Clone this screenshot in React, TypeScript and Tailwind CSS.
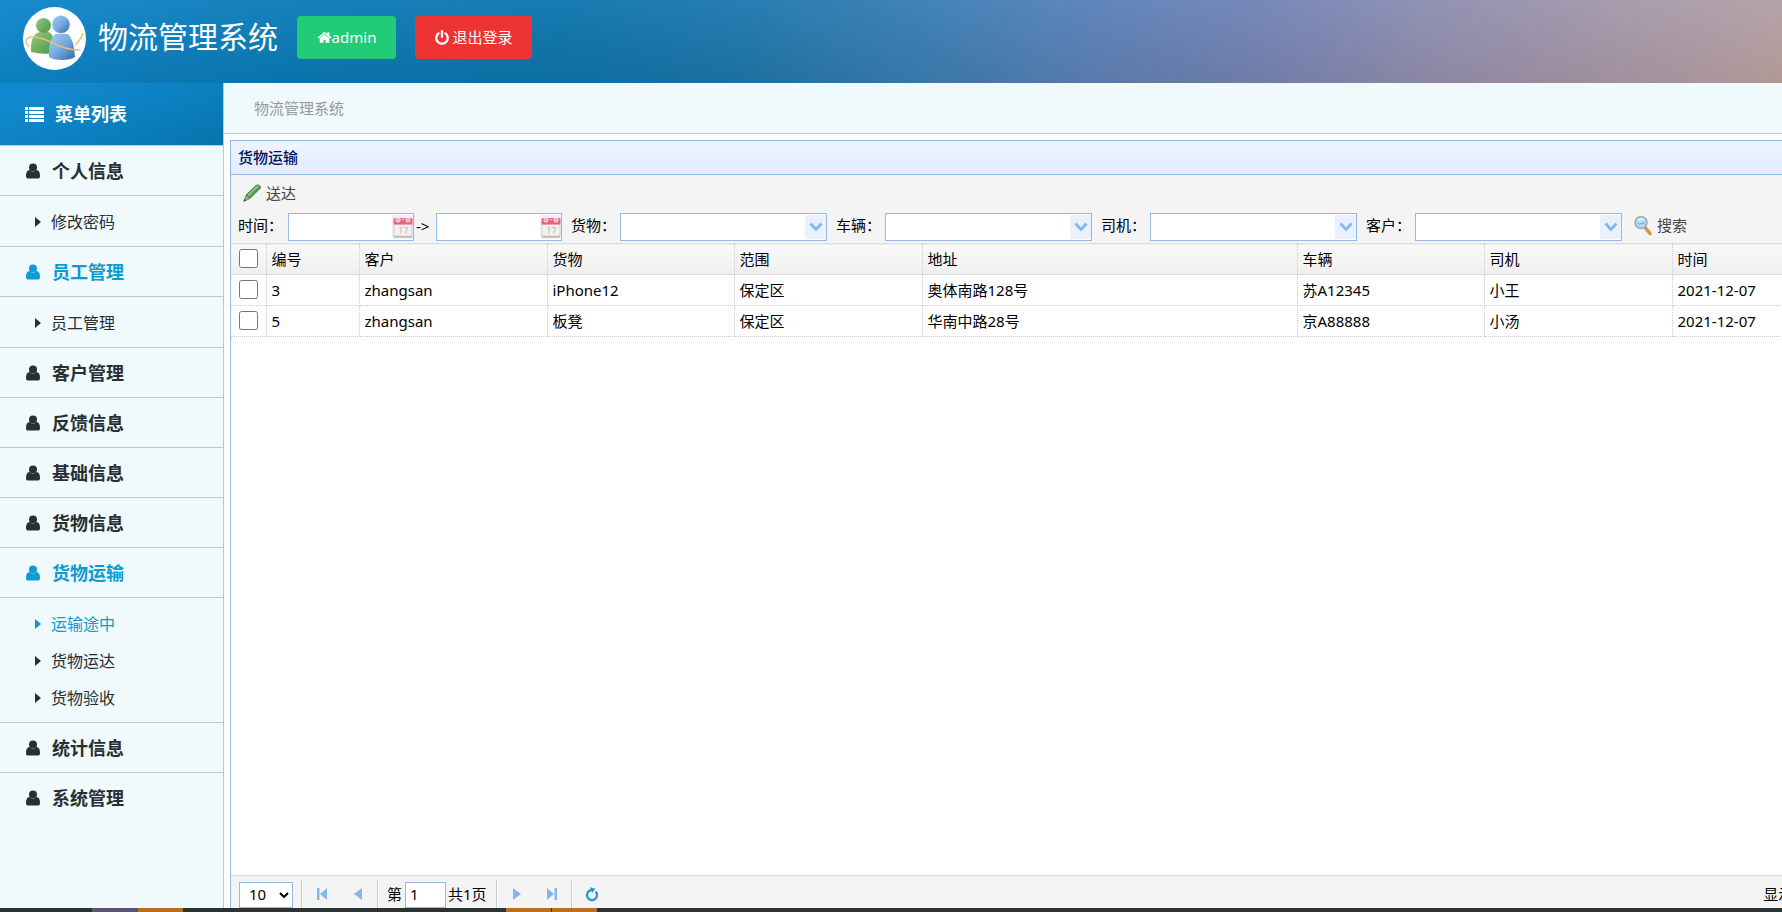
import { ReactNode } from "react";

interface MenuItem {
    title: string;
    active?: boolean;
    children?: { title: string; active?: boolean }[];
}

const menu: MenuItem[] = [
    { title: "个人信息", children: [{ title: "修改密码" }] },
    { title: "员工管理", active: true, children: [{ title: "员工管理" }] },
    { title: "客户管理" },
    { title: "反馈信息" },
    { title: "基础信息" },
    { title: "货物信息" },
    {
        title: "货物运输",
        active: true,
        children: [
            { title: "运输途中", active: true },
            { title: "货物运达" },
            { title: "货物验收" },
        ],
    },
    { title: "统计信息" },
    { title: "系统管理" },
];

const columns = [
    { title: "编号", width: "w-[93px]" },
    { title: "客户", width: "w-[188px]" },
    { title: "货物", width: "w-[187px]" },
    { title: "范围", width: "w-[188px]" },
    { title: "地址", width: "w-[375px]" },
    { title: "车辆", width: "w-[187px]" },
    { title: "司机", width: "w-[188px]" },
    { title: "时间", width: "" },
];

const rows = [
    ["3", "zhangsan", "iPhone12", "保定区", "奥体南路128号", "苏A12345", "小王", "2021-12-07"],
    ["5", "zhangsan", "板凳", "保定区", "华南中路28号", "京A88888", "小汤", "2021-12-07"],
];

const UserIcon = () => (
    <svg viewBox="0 0 14 16" className="h-4 w-[14px]" fill="currentColor" aria-hidden="true">
        <circle cx="7" cy="4.500" r="4" />
        <path d="M3.400 7Q7 10.600 10.600 7 14 7.400 14 13 14 15.600 11.500 15.600h-9Q0 15.600 0 13 0 7.400 3.400 7z" />
    </svg>
);

const HomeIcon = () => (
    <svg viewBox="0 0 1792 1792" className="size-[15px]" fill="currentColor" aria-hidden="true">
        <path d="M1472 992v480q0 26-19 45t-45 19h-384v-384h-256v384h-384q-26 0-45-19t-19-45v-480q0-1 .5-3t.5-3l575-474 575 474q1 2 1 6zm223-69l-62 74q-8 9-21 11h-3q-13 0-21-7l-692-577-692 577q-12 8-24 7-13-2-21-11l-62-74q-8-10-7-23.5t11-21.5l719-599q32-26 76-26t76 26l244 204v-195q0-14 9-23t23-9h192q14 0 23 9t9 23v408l219 182q10 8 11 21.5t-7 23.5z" />
    </svg>
);

const PowerIcon = () => (
    <svg viewBox="0 0 1792 1792" className="size-4" fill="currentColor" aria-hidden="true">
        <path d="M1664 896q0 156-61 298t-164 245-245 164-298 61-298-61-245-164-164-245-61-298q0-182 80.5-343t226.5-270q43-32 95.5-25t83.5 50q32 42 24.5 94.5t-49.5 84.5q-98 74-151.5 181t-53.5 228q0 104 40.5 198.5t109.5 163.5 163.5 109.5 198.5 40.5 198.5-40.5 163.5-109.5 109.5-163.5 40.5-198.5q0-121-53.5-228t-151.5-181q-42-32-49.5-84.5t24.5-94.5q31-43 84-50t95 25q146 109 226.5 270t80.5 343zm-640-768v640q0 52-38 90t-90 38-90-38-38-90v-640q0-52 38-90t90-38 90 38 38 90z" />
    </svg>
);

const ListIcon = () => (
    <svg viewBox="0 0 19 15" className="h-[15px] w-[19px]" fill="currentColor" aria-hidden="true">
        <path d="M0 0h3v3H0zM0 4h3v3H0zM0 8h3v3H0zM0 12h3v3H0zM4 0h15v3H4zM4 4h15v3H4zM4 8h15v3H4zM4 12h15v3H4z" />
    </svg>
);

const CaretIcon = () => (
    <svg viewBox="0 0 6 10" className="h-[10px] w-[6px]" fill="currentColor" aria-hidden="true">
        <path d="M0 0l6 5-6 5z" />
    </svg>
);

const PencilIcon = () => (
    <svg viewBox="0 0 18 18" className="size-[18px]" aria-hidden="true">
        <path d="M3 11L13 1.500Q14.500.300 16.500 1.500T17 4.500L7 14.500z" fill="#4f9e52" stroke="#2f6b35" strokeWidth=".7" />
        <path d="M5 11.500L15 2" stroke="#9bd293" strokeWidth="1.300" />
        <path d="M3 11l4 3.500L.7 17.500z" fill="#8fb07a" stroke="#4d6b45" strokeWidth=".6" />
        <path d="M1.700 14.900l1.500 1.400-2.500 1.200z" fill="#333" />
    </svg>
);

const CalendarIcon = () => (
    <svg viewBox="0 0 20 21" className="h-[21px] w-[20px]" aria-hidden="true">
        <path d="M1 7h18v12q0 1.500-1.500 1.500h-15Q1 20.500 1 19z" fill="#f3f1ee" stroke="#d5d0cc" />
        <path d="M1 19.500h18" stroke="#bdb8b4" strokeWidth="1.500" />
        <path d="M.5 2.500q0-1.500 1.500-1.500h16q1.500 0 1.500 1.500V7.500H.5z" fill="#ee6078" />
        <g fill="#c9b9bd" stroke="#f7eeee" strokeWidth=".8">
            <circle cx="5" cy="3" r="2.200" />
            <circle cx="15" cy="3" r="2.200" />
        </g>
        <path d="M8.500 1.500h3v2h-3z" fill="#d9a5ae" />
        <path d="M6.500 11l1.500-.8v6.300M10.500 10.500h4l-2 6" stroke="#d0ccc8" strokeWidth="1.500" fill="none" />
    </svg>
);

const SearchIcon = () => (
    <svg viewBox="0 0 18 22" className="h-[22px] w-[18px]" aria-hidden="true">
        <path d="M11 12.500l1.500 2" stroke="#8d8f96" strokeWidth="3" />
        <path d="M12.800 14.500l3.200 4" stroke="#d9953c" strokeWidth="3.600" strokeLinecap="round" />
        <circle cx="7" cy="7.500" r="5.800" fill="#b5e2f7" stroke="#a9afb8" strokeWidth="2" />
        <path d="M4 7.500q1 3.500 3 1 2 2 3-1.500" stroke="#4a9fd6" fill="none" />
        <path d="M4 5q3-3 6 0" stroke="#fff" fill="none" />
    </svg>
);

const Logo = () => (
    <svg viewBox="0 0 63 63" className="size-[63px]" aria-hidden="true">
        <defs>
            <linearGradient id="green" x1="0" y1="0" x2="1" y2="1">
                <stop offset="0" stopColor="#96c983" />
                <stop offset="1" stopColor="#4a9444" />
            </linearGradient>
            <linearGradient id="blue" x1="0" y1="0" x2="1" y2="1">
                <stop offset="0" stopColor="#a4cdf2" />
                <stop offset=".5" stopColor="#76aae0" />
                <stop offset="1" stopColor="#2f69b0" />
            </linearGradient>
        </defs>
        <circle cx="31.500" cy="31.500" r="31.500" fill="#fff" />
        <path d="M8 45Q7 27 17 25h8q7 1 7 21-12 2-24-1z" fill="url(#green)" />
        <circle cx="20.500" cy="18.500" r="7.500" fill="url(#green)" />
        <path d="M26 50Q25 33 32 27h13q6 5 7 23-4 3-13 3t-13-3z" fill="url(#blue)" />
        <circle cx="38" cy="17.500" r="9" fill="url(#blue)" stroke="#d7e8f8" strokeWidth=".6" />
        <path d="M6 40Q1 34 5 31q6-3 23 4 14 8 29 8M52 38q5-4 8-12" fill="none" stroke="#e9bf78" strokeWidth="1.500" />
    </svg>
);

const DateField = ({ label }: { label: string }) => (
    <span className="flex h-7 w-[126px] items-center border border-[#95b8e7] bg-white">
        <input aria-label={label} className="h-full min-w-0 flex-1 px-1 outline-none" />
        <button aria-label="选择日期" className="flex h-6 w-[21px] items-center justify-center bg-[#e9f1ff]">
            <CalendarIcon />
        </button>
    </span>
);

const ComboField = ({ id, label }: { id: string; label: string }) => (
    <>
        <label htmlFor={id} className="ml-[9px] w-[49px] pb-[3px]">{label}</label>
        <span className="flex h-7 w-[207px] items-center border border-[#95b8e7] bg-white">
            <input id={id} className="h-full min-w-0 flex-1 px-1 outline-none" />
            <button aria-label={"展开" + label} className="flex h-6 w-[21px] items-center justify-center bg-[#e9f1ff]">
                <svg viewBox="0 0 14 10" className="h-[10px] w-[14px]" aria-hidden="true">
                    <path d="M1.500 1.500L7 7.500l5.500-6" fill="none" stroke="#84b8ea" strokeWidth="2.800" />
                </svg>
            </button>
        </span>
    </>
);

const PagerButton = ({ label, children }: { label: string; children: ReactNode }) => (
    <button aria-label={label} className="flex h-7 w-[30px] items-center justify-center">
        {children}
    </button>
);

const Separator = () => <span className="h-7 w-[2px] border-l border-[#ccc] bg-white" />;

const Header = () => (
    <header className="flex h-[83px] items-start overflow-hidden bg-[linear-gradient(to_bottom,rgba(120,170,220,0.1),rgba(0,0,0,0.07)),linear-gradient(97deg,#0d88cc_0%,#0b7cb8_16%,#0d76ac_32%,#2078ad_42%,#3c7fb4_52%,#5a82b8_60%,#7685b5_70%,#9590b0_80%,#ac9aa9_90%,#bea4a2_100%)] pl-[23px] text-white">
        <div className="mt-[7px]">
            <Logo />
        </div>
        <h1 className="ml-3 mt-4 text-[30px] leading-[42px]">物流管理系统</h1>
        <button className="ml-[19px] mt-4 flex h-[43px] w-[99px] items-center justify-center rounded bg-[#22cc77]">
            <HomeIcon />
            admin
        </button>
        <button className="ml-[19px] mt-4 flex h-[43px] w-[117px] items-center justify-center gap-[2px] rounded bg-[#ee3333]">
            <PowerIcon />
            退出登录
        </button>
    </header>
);

const Sidebar = () => (
    <nav className="w-[224px] shrink-0 border-r border-[#b0cdd8] bg-[#f0f9fc] text-[#282f33]">
        <h2 className="flex h-[62px] items-center gap-[11px] bg-[linear-gradient(160deg,#1188cd_20%,#0575ae_100%)] pl-[25px] text-lg font-bold text-white">
            <ListIcon />
            菜单列表
        </h2>
        <ul>
            {menu.map((item) => (
                <li key={item.title} className="border-t border-[#b0cdd8]">
                    <a
                        href="#"
                        className={`flex h-[49px] items-center gap-3 pl-[26px] text-lg font-bold ${item.active ? "text-[#0c9bd4]" : ""}`}
                    >
                        <UserIcon />
                        {item.title}
                    </a>
                    {item.children && (
                        <ul className="border-t border-[#b0cdd8] pt-[7px] pb-[6px]">
                            {item.children.map((child) => (
                                <li key={child.title}>
                                    <a
                                        href="#"
                                        className={`flex h-[37px] items-center gap-[10px] pl-[35px] text-base ${child.active ? "text-[#0c9bd4]" : ""}`}
                                    >
                                        <CaretIcon />
                                        {child.title}
                                    </a>
                                </li>
                            ))}
                        </ul>
                    )}
                </li>
            ))}
        </ul>
    </nav>
);

const Toolbar = () => (
    <div className="bg-[#f4f4f4] pb-[2px] pl-[7px]">
        <button className="flex h-[38px] items-center gap-[5px] pb-[2px] pl-[5px] text-[#444]">
            <PencilIcon />
            送达
        </button>
        <div className="flex h-7 items-center">
            <span className="w-[50px] pb-[3px]">时间：</span>
            <DateField label="开始时间" />
            <span className="w-[22px] pb-[2px] pl-[2px]">-&gt;</span>
            <DateField label="结束时间" />
            <ComboField id="goods" label="货物：" />
            <ComboField id="car" label="车辆：" />
            <ComboField id="driver" label="司机：" />
            <ComboField id="customer" label="客户：" />
            <button className="ml-3 flex items-center gap-[5px] pb-[3px] text-[#444]">
                <SearchIcon />
                搜索
            </button>
        </div>
    </div>
);

const DataTable = () => (
    <table className="w-full table-fixed border-collapse text-left">
        <thead>
            <tr className="h-[31px] border-y border-[#ddd] bg-[linear-gradient(#f9f9f9,#efefef)]">
                <th className="w-[35px] border-r border-dotted border-r-[#ccc] pb-px pl-2">
                    <input type="checkbox" aria-label="全选" className="block size-[19px]" />
                </th>
                {columns.map((column) => (
                    <th
                        key={column.title}
                        className={`border-r border-dotted border-r-[#ccc] px-[5px] font-normal ${column.width}`}
                    >
                        {column.title}
                    </th>
                ))}
            </tr>
        </thead>
        <tbody>
            {rows.map((row) => (
                <tr key={row[0]} className="h-[31px]">
                    <td className="border-r border-b border-dotted border-[#ccc] pb-px pl-2">
                        <input type="checkbox" aria-label={"选择" + row[0]} className="block size-[19px]" />
                    </td>
                    {row.map((cell, i) => (
                        <td key={i} className="border-r border-b border-dotted border-[#ccc] px-[5px]">
                            {cell}
                        </td>
                    ))}
                </tr>
            ))}
        </tbody>
    </table>
);

const Pager = () => (
    <div className="mt-auto flex h-[33px] items-start border-t border-[#ddd] bg-[#f4f4f4] pl-2">
        <div className="mt-[6px] flex h-[26px] w-[54px] items-center border border-[#95b8e7] bg-white">
            <select aria-label="每页条数" className="h-full w-full pr-[2px] pb-[2px] pl-[5px] outline-none">
                <option>10</option>
            </select>
        </div>
        <div className="ml-2 flex h-8 items-end">
            <Separator />
            <div className="flex w-[74px] justify-between px-1">
                <PagerButton label="首页">
                    <svg viewBox="0 0 12 12" className="size-3" fill="#84b8ea" aria-hidden="true">
                        <path d="M1 0h2.500v12H1zM11 0v12L4 6z" />
                    </svg>
                </PagerButton>
                <PagerButton label="上一页">
                    <svg viewBox="0 0 12 12" className="size-3" fill="#84b8ea" aria-hidden="true">
                        <path d="M10 0v12L2 6z" />
                    </svg>
                </PagerButton>
            </div>
            <Separator />
            <label htmlFor="page" className="ml-2 h-[26px] w-[18px] leading-[24px]">第</label>
            <input
                id="page"
                defaultValue="1"
                className="h-[26px] w-[41px] border border-[#95b8e7] bg-white px-1 pb-[3px] outline-none"
            />
            <span className="ml-[2px] h-[26px] w-[48px] leading-[24px]">共1页</span>
            <Separator />
            <div className="flex w-[73px] justify-between px-1">
                <PagerButton label="下一页">
                    <svg viewBox="0 0 12 12" className="size-3" fill="#84b8ea" aria-hidden="true">
                        <path d="M2 0v12l8-6z" />
                    </svg>
                </PagerButton>
                <PagerButton label="末页">
                    <svg viewBox="0 0 12 12" className="size-3" fill="#84b8ea" aria-hidden="true">
                        <path d="M8.500 0H11v12H8.500zM1 0v12l7-6z" />
                    </svg>
                </PagerButton>
            </div>
            <Separator />
            <div className="pl-1">
                <PagerButton label="刷新">
                    <svg viewBox="0 0 14 15" className="h-[15px] w-[14px]" aria-hidden="true">
                        <path d="M10.600 4.600A5 5 0 1 1 6 3.200" fill="none" stroke="#2a96d0" strokeWidth="2.300" />
                        <path d="M5 .3l5.500 1.500L7 6z" fill="#2a96d0" />
                    </svg>
                </PagerButton>
            </div>
        </div>
        <p className="mt-[6px] ml-auto pr-[6px] leading-[24px] whitespace-nowrap">显示1到2,共2记录</p>
    </div>
);

// Sliver of the desktop task bar under the page
const TaskBar = () => (
    <div className="flex h-1 bg-[#2b3233]">
        <span className="ml-[92px] w-[46px] bg-[#5f5378]" />
        <span className="w-[45px] bg-[#b8701f]" />
        <span className="ml-[323px] w-[45px] bg-[#b8701f]" />
        <span className="ml-px w-[45px] bg-[#b8701f]" />
    </div>
);

const App = () => {
    return (
        <div className="flex h-screen flex-col overflow-hidden bg-white font-['Noto_Sans','Noto_Sans_CJK_SC',sans-serif] text-[15px] text-black">
            <Header />
            <div className="flex min-h-0 flex-1">
                <Sidebar />
                <main className="flex min-w-0 flex-1 flex-col overflow-hidden">
                    <div className="flex h-[51px] shrink-0 items-center border-b border-[#b0cdd8] bg-[#f0f9fc] pl-[30px] text-[#999]">
                        物流管理系统
                    </div>
                    <section className="mt-[6px] ml-[6px] mr-[-108px] flex flex-1 flex-col border-x border-t border-[#95b8e7]">
                        <h3 className="flex h-[34px] items-center border-b border-[#95b8e7] bg-[linear-gradient(#eff5ff,#e0ecff)] pl-[7px] font-medium text-[#00105c]">
                            货物运输
                        </h3>
                        <Toolbar />
                        <DataTable />
                        <Pager />
                    </section>
                </main>
            </div>
            <TaskBar />
        </div>
    );
};

export default App;
